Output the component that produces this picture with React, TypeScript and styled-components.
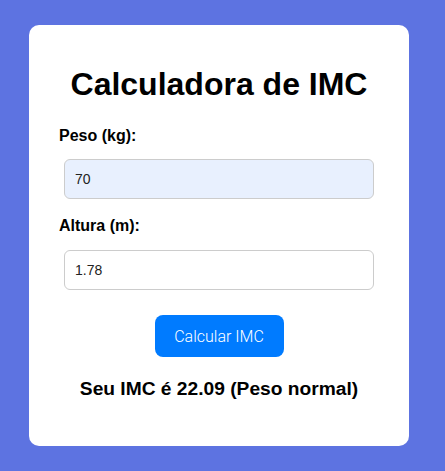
import styled, { createGlobalStyle } from "styled-components";

const GlobalStyle = createGlobalStyle`
  html, body {
    margin: 0;
    padding: 0;
  }

  body {
    font-family: "Liberation Sans", Arial, sans-serif;
    background: #5d73e1;
  }
`;

export default function App() {
  return (
    <>
      <GlobalStyle />
      <Page>
        <Card>
          <Title>Calculadora de IMC</Title>
          <Label htmlFor="peso">Peso (kg):</Label>
          <Input id="peso" defaultValue="70" $filled />
          <Label htmlFor="altura" $spaced>Altura (m):</Label>
          <Input id="altura" defaultValue="1.78" />
          <Button type="button">Calcular IMC</Button>
          <Result>Seu IMC é 22.09 (Peso normal)</Result>
        </Card>
      </Page>
    </>
  );
}

const Page = styled.div`
  display: flex;
  justify-content: center;
  align-items: center;
  min-height: 100vh;
  padding-right: 7px;
  box-sizing: border-box;
`;

const Card = styled.div`
  width: 380px;
  box-sizing: border-box;
  padding: 20px 30px 46px;
  background: #ffffff;
  border-radius: 10px;
  display: flex;
  flex-direction: column;
`;

const Title = styled.h1`
  margin: 21px 0 24px;
  font-size: 32px;
  font-weight: bold;
  text-align: center;
  color: #000;
`;

const Label = styled.label<{ $spaced?: boolean }>`
  display: block;
  margin-top: ${({ $spaced }) => ($spaced ? "18px" : "0")};
  font-size: 16px;
  font-weight: bold;
  color: #000;
`;

const Input = styled.input<{ $filled?: boolean }>`
  display: block;
  width: 310px;
  height: 40px;
  box-sizing: border-box;
  margin: 14.5px auto 0;
  padding: 0 10px;
  font-family: "Liberation Sans", Arial, sans-serif;
  font-size: 14px;
  color: #222;
  background: ${({ $filled }) => ($filled ? "#e8f0fe" : "#ffffff")};
  border: 1px solid #cccccc;
  border-radius: 6px;
  outline: none;
`;

const Button = styled.button`
  align-self: center;
  margin-top: 25.5px;
  width: 129px;
  height: 42px;
  padding: 0;
  font-family: Roboto, "Liberation Sans", Arial, sans-serif;
  font-weight: 300;
  font-size: 16px;
  color: #ffffff;
  background: #007bff;
  border: none;
  border-radius: 8px;
  cursor: pointer;
`;

const Result = styled.p`
  margin: 21px 0 0;
  font-size: 19.2px;
  font-weight: bold;
  text-align: center;
  color: #000;
`;
